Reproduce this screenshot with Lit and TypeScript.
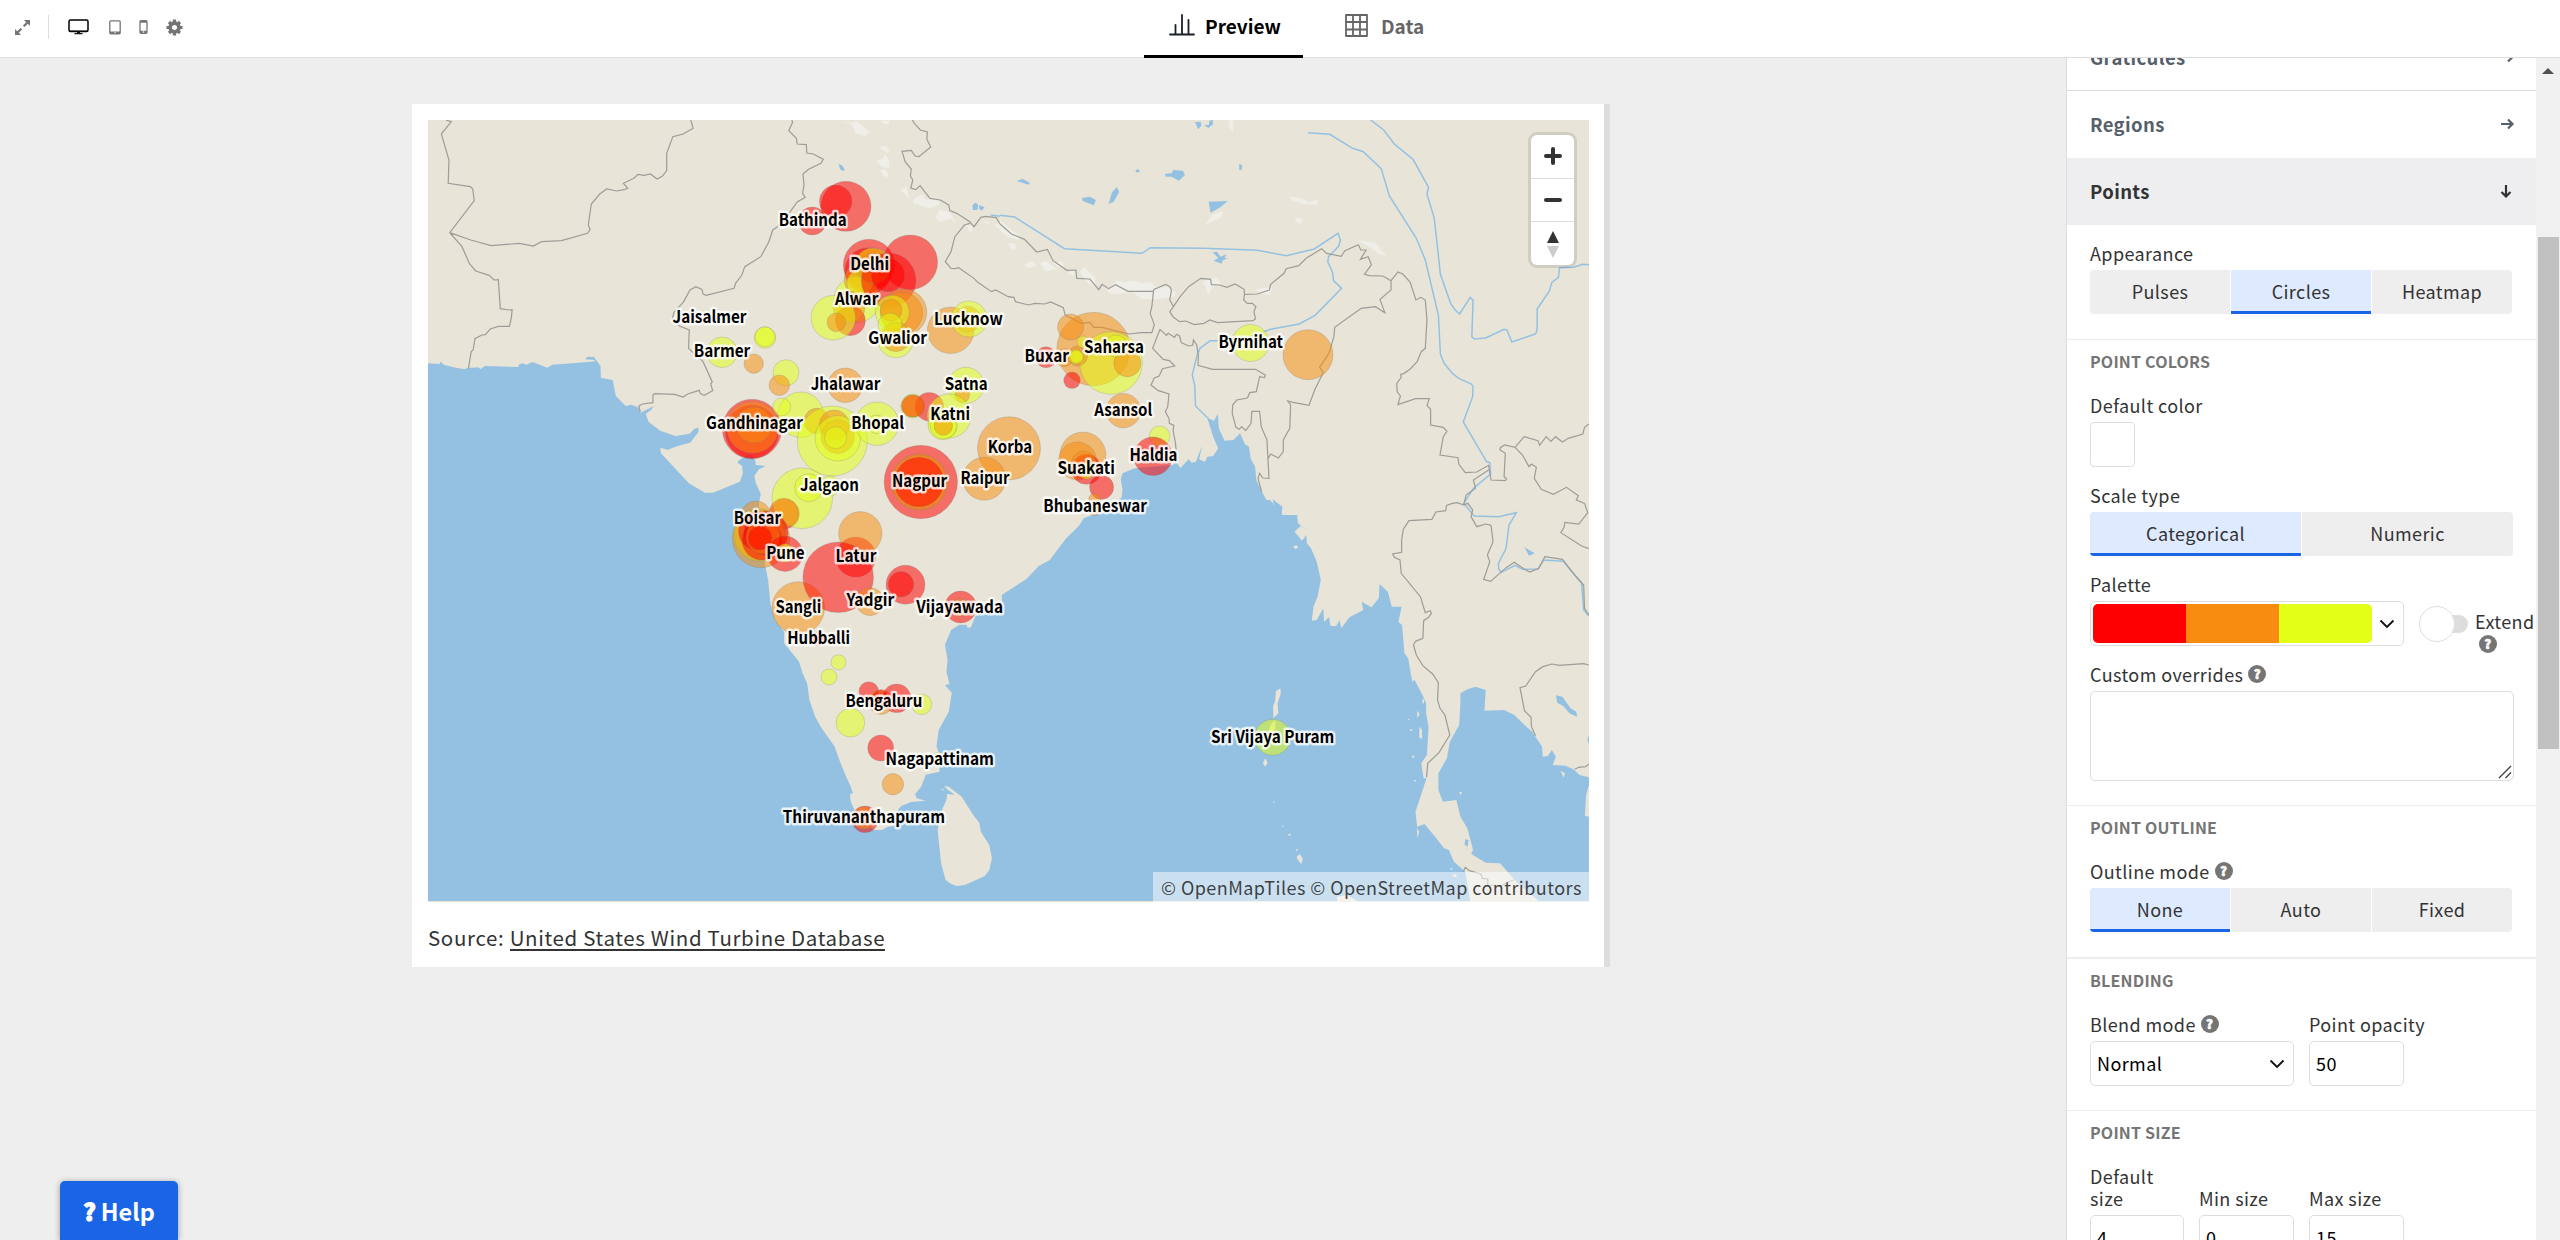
import { LitElement, html, css, svg, nothing } from "lit";
import { customElement, property } from "lit/decorators.js";
import { classMap } from "lit/directives/class-map.js";

type Dot = [number, number, number, "r" | "o" | "y"];
type Label = [string, number, number, number];

const FILL = { r: "#ff0000", o: "#f88c10", y: "#e2ff17" };

// Each sheet of the base map has its own drawing units.
const SHEETS = {
  nw: "translate(400 90) scale(.382653 .333333)",
  sw: "translate(400 500) scale(.382653 .333333)",
  ne: "translate(1000 90) scale(.408163 .333333)",
  se: "translate(1000 500) scale(.408163 .333333)",
};

const WATER = {
  nw: "M73 820L103 822L106 815L116 825L140 832L168 838L176 834L204 832L210 837L222 828L250 829L308 831L312 823L320 820L330 824L346 816L360 822L385 833L398 824L450 820L512 814L505 809L484 808L490 800L507 801L524 828L525 863L556 870L564 918L590 948L604 944L622 952L628 968L664 948L656 960L642 972L650 996L680 1022L720 1038L757 1031L768 1018L780 1012L780 1026L758 1058L726 1068L700 1079L680 1073L682 1090L755 1180L797 1208L818 1208L888 1175L896 1150L894 1128L882 1118L884 1112L908 1095L918 1095L928 1110L930 1125L955 1128L938 1138L926 1158L930 1180L943 1212L938 1240L938 1290L73 1290Z M1146 222L1155 226L1162 238L1160 244L1150 238Z M1496 345L1504 338L1511 344L1509 360L1497 360Z M1514 345L1528 352L1520 362L1513 356Z",
  sw: "M73 30L938 30L945 120L955 200L962 240L968 310L980 360L1004 395L1004 430L1043 485L1052 520L1064 550L1070 600L1085 650L1102 685L1135 738L1150 785L1166 830L1176 855L1184 880L1176 882L1178 905L1190 935L1216 968L1240 990L1260 990L1275 980L1290 978L1297 935L1310 918L1335 906L1374 902L1350 895L1346 882L1362 860L1374 824L1410 815L1408 760L1402 738L1408 690L1434 635L1442 578L1424 556L1436 552L1428 515L1431 480L1424 435L1440 390L1462 374L1480 374L1484 384L1492 382L1504 348L1530 335L1572 320L1572 1203L73 1203Z",
  ne: "M188 1320L205 1285L225 1275L265 1260L298 1222L300 1200L296 1168L300 1150L330 1135L370 1130L424 1125L430 1112L442 1134L462 1108L470 1118L480 1115L495 1067L488 1108L502 1115L508 1100L522 1098L535 1075L523 1030L510 985L524 992L534 972L536 1015L550 1052L572 1050L588 1030L600 1062L610 1070L614 1105L625 1130L628 1170L642 1206L660 1245L672 1250L668 1228L692 1250L690 1275L728 1275L730 1300L748 1318Z M478 96L492 95L493 108L485 118Z M500 105L512 104L513 92L522 90L521 104L510 114Z M41 273L55 266L73 278L70 284Z M201 324L220 320L235 330L230 346L203 333Z M266 342L274 308L286 291L292 306L278 336Z M404 251L420 250L425 240L448 242L453 256L438 272L420 260L406 260Z M586 222L594 226L592 240L586 239Z M331 242L338 237L343 244L336 248Z M511 335L558 333L540 352L516 368Z M521 487L532 485L540 500L556 492L550 504L558 505L546 511L543 521L523 512L535 504Z",
  se: "M0 340L6 318L4 285L64 238L95 198L122 180L162 115L190 82L210 55L236 60L270 40L290 0L662 0L670 12L676 35L688 20L690 45L706 45L718 62L734 80L722 95L740 122L750 105L752 130L762 145L776 185L786 240L778 290L768 320L764 362L776 360L792 325L794 365L806 352L810 378L824 378L832 360L836 385L856 352L890 330L886 305L910 322L928 295L930 252L950 275L960 320L984 320L976 365L985 375L991 460L1000 475L1010 545L1016 540L1035 585L1044 610L1044 640L1050 680L1046 765L1032 790L1038 835L1045 835L1018 935L1022 980L1040 972L1066 1010L1088 1045L1100 1050L1112 1085L1140 1115L1152 1203L0 1203Z M1128 580L1145 568L1165 560L1190 570L1187 632L1235 630L1260 645L1290 680L1304 695L1328 740L1330 770L1342 768L1352 750L1362 770L1354 795L1385 797L1405 808L1420 825L1443 832L1443 855L1436 885L1433 948L1443 950L1443 1203L1320 1203L1265 1145L1225 1090L1190 1088L1155 1062L1158 1045L1145 985L1128 950L1118 900L1085 905L1074 870L1074 820L1095 775L1102 725L1125 675L1128 610Z M1285 142L1310 160L1296 167Z M1362 586L1378 590L1398 625L1412 635L1414 650L1395 640L1380 618L1365 608Z M1443 705L1439 718L1443 735Z M1140 1018L1148 1020L1146 1040L1138 1034Z",
};

const ISLANDS = {
  sw: "M1422 858L1434 860L1468 890L1498 945L1514 968L1518 995L1540 1035L1547 1075L1540 1110L1528 1128L1494 1146L1476 1155L1456 1158L1440 1152L1426 1140L1414 1090L1405 990L1418 925L1428 900L1430 882L1450 884L1430 868Z M1412 866L1420 868L1420 872Z",
  se: "M687 565L676 574L674 605L669 618L670 655L682 640L680 610L688 580Z M675 662L666 668L658 692L668 704L674 685Z M650 775L644 790L650 800L656 788Z M735 1062L727 1070L730 1080L738 1092L742 1077Z M669 905h3v4h-3z M691 977h3v4h-3z M707 1001h5v6h-5z M725 1048h4v4h-4z M826 1190L850 1186L875 1203L826 1203Z M1022 632L1028 642L1022 655Z M1028 680L1034 690L1034 718L1027 712Z M1035 598h4v12h-4z M1005 688h5v5h-5z M1010 767h5v6h-5z M1014 840h5v4h-5z M1000 657h3v4h-3z M1021 985L1027 995L1023 1015Z M1373 812L1384 820L1381 833Z M1126 876h5v7h-5z M1104 1105h4v5h-4z M1108 1125l8-3 4 6-8 4z M724 92L737 78L748 88L745 98L736 94L728 100Z M718 140L726 136L731 142L724 147Z M1152 1030L1160 1055L1154 1050Z",
};

const SNOW = {
  nw: "M1152 92L1180 98L1192 93L1212 108L1228 126L1215 138L1190 130L1182 104Z M1256 92L1280 92L1276 104L1262 100Z M1253 172L1268 168L1281 180L1272 190Z M1244 212L1260 206L1268 194L1279 210L1278 234L1262 232Z M1254 240L1268 238L1278 256L1268 263Z M1308 300L1324 290L1331 327Z M1341 328L1366 312L1374 330L1400 322L1412 342L1385 356L1342 340Z M1400 382L1410 360L1436 366L1455 402L1440 386L1410 396Z M1480 402L1498 412L1490 430Z M1524 392L1540 396L1536 406Z M1552 405L1568 400L1568 418Z",
  ne: "M560 90L573 92L570 126L563 112Z M0 390L20 412L50 440L44 450L18 440L0 420Z M20 458L40 462L36 480L24 474Z M58 524L78 512L90 525L70 535Z M98 520L112 512L140 538L112 544Z M130 520L152 514L158 532L140 530Z M162 550L180 540L188 556L176 556Z M196 545L206 530L234 565L232 590L212 575Z M262 605L285 572L310 575L330 572L348 580L370 575L378 590L410 590L430 606L428 620L400 625L385 628L345 626L325 606L275 612Z M498 575L512 566L535 565L540 585L520 590L510 615L506 596Z M628 596L668 592L660 615L635 608Z M708 318L740 326L755 336L778 330L778 344L745 342L716 332Z M720 384L745 386L733 402Z M502 404L522 372L546 364L544 380L520 396Z M876 450L920 458L946 498L928 492L905 472Z",
};

const BORDERS = {
  nw: "M120 90L134 95L108 132L128 210L126 280L184 290L190 297L194 332L130 428L162 470L182 522L198 543L233 556L246 570L257 569L262 656L284 660L293 659L291 684L286 709L257 709L236 717L223 734L214 735L196 746L191 780L186 785L179 835 M130 428L185 450L238 467L312 460L348 468L370 455L422 452L490 430L497 418L492 405L500 342L522 312L540 297L566 303L586 299L595 294L584 280L612 264L622 253L638 256L654 252L672 267L686 258L697 242L697 190L713 140L740 132L766 115L760 90 M1024 90L1026 97L1016 122L1036 145L1038 162L1062 164L1063 189L1080 192L1106 208L1100 220L1068 238L1053 252L1056 285L1052 310L1059 322L1038 336L1018 368L985 412L974 420L964 455L943 500L901 530L893 556L877 580L873 595L800 616L792 612L789 598L773 590L758 600L740 637L716 667L712 685L730 708L756 720L754 775L770 792L792 815L816 876L812 882L817 902L795 916L785 911L782 901L752 912L740 921L718 913L665 911L661 915L661 938L634 942L624 948L628 966 M1339 90L1344 100L1360 120L1378 126L1377 148L1387 171L1356 200L1346 198L1336 181L1312 184L1320 215L1336 237L1334 258L1340 270L1335 294L1348 299L1359 287L1385 325L1412 330L1434 345L1437 362L1455 370L1489 395L1500 410L1518 382L1530 379L1558 383L1568 402 M1489 400L1475 405L1450 440L1440 485L1425 515L1440 535L1452 536L1460 533L1500 565L1510 577L1546 605L1556 600L1568 607",
  ne: "M0 402L28 432L60 448L90 486L116 478L130 512L164 541L186 540L188 565L220 567L242 599L250 583L266 596L283 584L314 604L376 604L377 598L406 583L416 590L420 600L416 630L425 650L440 622L462 590L492 565L516 568L518 584L538 585L556 592L576 582L598 598L599 613L630 612L660 600L663 583L696 550L701 536L732 527L750 505L788 476L800 490L836 499L845 482L878 464L884 480L897 480L883 508L902 500L910 524L893 553L905 557L938 558L958 572L975 546L987 552L1005 577L1019 630L1031 622L1042 630L1046 690L1042 775L1032 785L1022 815L1005 837L990 850L982 853L983 862L972 880L973 905L981 918L975 944L1018 926L1052 926L1046 946L1055 958L1055 1005L1086 1012L1095 1024L1086 1040L1078 1095L1122 1103L1124 1122L1140 1148L1168 1146L1197 1126L1203 1170L1238 1172L1241 1166L1235 1160L1238 1090L1225 1080L1226 1073L1236 1065L1262 1072L1284 1040L1318 1052L1322 1066L1338 1040L1350 1054L1361 1040L1378 1056L1392 1045L1428 1032L1432 1012L1443 1002 M0 607L20 620L34 622L38 635L70 645L85 640L110 642L124 636L155 653L160 676L200 700L220 697L230 712L250 712L316 732L345 728L372 728L378 704L368 670L372 650L376 604 M425 650L416 665L425 682L440 695L455 693L476 704L500 700L514 690L533 698L620 692L626 686L622 665L627 650L618 640L606 640L597 630L599 613 M392 718L374 775L400 808L415 812L428 828L398 836L390 858L378 864L370 885L388 902L414 912L411 950L405 965L414 985L415 1000L426 1006L424 1020L430 1060L434 1115 M392 718L408 736L412 730L428 742L432 733L440 738L444 758L462 768L472 766L474 750L482 765L486 800L485 826L521 838L626 838L650 855L648 863L636 860L628 905L612 908L606 924L580 930L570 945L569 970L578 1012L586 1018L592 1010L602 1022L615 1000L617 964L636 964L640 1010L654 1050L659 1165L644 1164L636 1150L632 1165L641 1205 M657 1105L663 1092L682 1104L694 1085L694 1050L710 1015L712 945L705 933L718 937L757 946L772 897L792 848L783 832L806 790L818 740L820 712L885 655L920 650L943 668L931 628L958 600L958 572 M1262 1072L1280 1095L1296 1130L1302 1122L1314 1132L1309 1165L1326 1198L1356 1213L1388 1192L1417 1217L1412 1230L1432 1240L1440 1268L1418 1302L1384 1297L1382 1312L1374 1328L1425 1368L1443 1376 M1197 1140L1160 1170L1165 1195L1142 1215L1136 1245L1120 1238L1108 1240L1094 1246L1092 1262L1068 1266L1058 1288L1002 1292L988 1318 M1136 1245L1146 1240L1158 1260L1154 1280L1168 1310L1190 1302L1203 1306",
  se: "M988 88L984 120L984 157L962 162L966 172L980 180L983 220L1030 290L1042 338L1054 332L1057 340L1050 352L1038 362L1036 415L1018 424L1013 435L1020 465L1036 497L1060 522L1074 548L1072 600L1078 625L1090 645L1102 705L1076 757L1048 790L1045 832 M1203 76L1208 125L1194 165L1200 185L1185 238L1202 244L1240 203L1260 187L1285 208L1298 216L1320 205L1335 170L1378 178L1410 228L1430 255L1432 325L1443 345 M1443 495L1430 491L1370 496L1352 492L1330 500L1312 515L1288 558L1274 563L1285 632L1301 652L1302 680L1312 707 M1408 808L1418 802L1435 800L1443 792 M1135 1115L1140 1102L1150 1112L1178 1122L1182 1135L1195 1137L1195 1155L1230 1157L1240 1148L1258 1140",
};

const RIVERS = {
  nw: "M1544 375L1568 379",
  ne: "M0 376L36 381L158 476L348 490L368 473L500 475L630 481L702 497L770 477L828 430L834 450L830 468L805 500L803 515L815 548L817 572L837 595L772 676L733 702L663 718L600 745L530 752L515 752L490 775L482 800L471 855L477 885L479 948L510 985L524 1040L537 1076L528 1100 M755 128L808 133L864 175L890 185L934 236L954 318L1020 445L1042 510L1074 675L1079 792L1088 820L1108 850L1125 866L1155 882L1159 890L1158 920L1135 996L1192 1115L1200 1118L1202 1152L1160 1195L1136 1240L1162 1278L1222 1280L1265 1268L1247 1305L1240 1375 M908 90L940 120L966 162L1012 208L1050 292L1046 312L1064 385L1079 553L1104 640L1115 660L1126 672L1152 622L1159 630L1156 740L1162 747L1190 744L1235 718L1242 720L1254 756L1312 732L1316 720L1316 657L1346 603L1352 577L1368 562L1371 533L1405 532L1428 523L1443 524",
  se: "M1240 145L1221 190L1222 208L1228 217L1262 196L1280 208L1318 207L1332 180L1380 184L1425 250L1430 330L1443 348",
};

const DOTS: Dot[] = [
  [846, 206.3, 25, "r"], [835.7, 201.3, 16.3, "r"], [812.3, 221, 14, "r"],
  [869, 265, 25.7, "r"], [910.3, 262.3, 27.3, "r"], [868, 271, 23.3, "r"],
  [857, 299.5, 23, "y"], [861.5, 280, 17.3, "o"], [860, 283, 13, "y"], [873, 266, 18, "y"], [872, 265, 17, "o"],
  [874, 268, 15, "o"], [888.7, 280.3, 27.3, "r"], [888, 275, 16.7, "r"],
  [850.3, 320.7, 15, "r"], [849, 307, 16, "o"], [833.3, 317.7, 22.3, "y"], [836.3, 322.3, 9.3, "o"],
  [903.5, 312.3, 23.3, "o"], [901.5, 313, 21, "o"], [892.3, 312.3, 17, "y"], [891, 310.3, 11, "o"],
  [895.7, 340, 17.7, "y"], [896, 337, 14.5, "o"], [890, 325, 12, "y"],
  [950.7, 330.3, 23.3, "o"], [967.7, 319.3, 13, "o"], [969, 319, 18, "y"],
  [765, 337.7, 10.7, "y"], [765, 336.7, 10, "y"], [722, 352.3, 15.3, "y"], [753.7, 363.7, 9.7, "o"],
  [786, 372.7, 13, "y"], [779.3, 385.3, 10.3, "o"], [845.3, 385.3, 17.3, "o"],
  [966, 385.3, 18, "y"], [962.3, 395, 7.3, "o"], [912.7, 406, 12, "y"], [912.7, 406, 11, "r"],
  [929.3, 406.7, 14.3, "r"], [912.7, 406, 11, "o"], [949, 416, 22, "y"], [942.7, 425, 14.7, "y"], [943.3, 426, 13, "y"], [943.3, 426, 9.3, "o"],
  [752, 429, 29.7, "r"], [752, 431.7, 26.7, "r"], [752.7, 427.3, 26, "o"], [754, 425, 18, "o"],
  [800.7, 414.7, 22.7, "y"], [781.7, 407, 9, "y"], [816.7, 421, 12.7, "o"], [832.3, 441, 35, "y"],
  [834.3, 425, 15, "o"], [837.7, 436.7, 16.7, "o"], [837.7, 438.3, 22.7, "y"], [835.7, 437.7, 11, "y"],
  [877, 423.7, 21.7, "y"], [876.7, 424.3, 9.3, "y"],
  [920.8, 482, 36.7, "r"], [919.5, 482, 28.3, "o"], [919.3, 482, 27, "o"], [919, 482, 24.8, "r"],
  [784.5, 514, 15, "r"], [802.2, 498.3, 30.3, "y"], [808.7, 487.7, 14, "y"], [830, 486, 10, "y"],
  [756, 516, 15, "o"], [783.8, 513, 14.7, "o"],
  [761, 539, 28.7, "o"], [759.5, 535, 26.3, "y"], [759.5, 535, 25.5, "o"], [766, 533, 22, "r"],
  [758, 531, 19.5, "r"], [762, 540, 20, "r"], [763, 537, 17, "o"], [760, 538, 12, "r"],
  [785, 553.7, 17.7, "r"], [785, 553, 9.3, "y"],
  [855.8, 557, 20, "r"], [860.3, 533.3, 21.7, "o"], [798.2, 608, 26.3, "o"], [838.2, 577.3, 35.3, "r"],
  [870, 601.7, 14, "o"], [905.5, 584.7, 19.5, "r"], [901, 584.3, 12.7, "r"],
  [960.6, 607, 16, "r"], [960, 607.7, 9, "o"], [818, 638.7, 7, "r"],
  [838.5, 662.3, 7.5, "y"], [829, 677, 8, "y"], [868.8, 691.5, 9.8, "r"], [881, 702, 12.5, "o"], [880.5, 699, 9, "r"],
  [896.7, 698.3, 14.3, "r"], [921.6, 704.3, 10.2, "y"], [850.4, 722.7, 14.3, "y"], [880.7, 748, 13, "r"],
  [938.8, 759.3, 7, "y"], [892.9, 784.3, 10.7, "o"], [865, 819.3, 13.3, "r"], [864.2, 818, 11.3, "o"],
  [1093.5, 349, 36.7, "o"], [1070.6, 327, 13, "o"], [1111, 363, 31.3, "y"], [1127.3, 363.3, 13.5, "o"], [1116, 346, 11, "y"],
  [1046, 357.3, 10.5, "r"], [1064, 357.7, 9, "o"], [1077.5, 356, 10, "o"], [1076, 356.7, 7.5, "y"], [1076.5, 356.7, 6.5, "y"], [1083, 342, 6, "y"],
  [1072, 380.3, 8.3, "r"], [1123.3, 410.7, 17.2, "o"], [1159.6, 436.3, 10.3, "y"], [1153, 456.3, 19.3, "r"],
  [1009, 448.3, 31.5, "o"], [984.3, 478.7, 21.5, "o"], [1082.9, 455, 23, "o"], [1077.5, 461, 19, "o"],
  [1086.5, 469.3, 15, "r"], [1083.7, 463, 12, "o"], [1086.5, 471, 8, "y"], [1101.6, 487.3, 12, "r"],
  [1094.7, 499.3, 6, "o"], [1094.7, 509, 6.5, "o"], [1250.6, 343, 18.5, "y"], [1308, 354.7, 25, "o"], [1272.7, 737.3, 18, "y"],
];

// name, left edge, baseline, drawn width
const LABELS: Label[] = [
  ["Bathinda", 778.7, 225.7, 68], ["Delhi", 850.3, 270, 38.7], ["Alwar", 835, 304.7, 43.3], ["Lucknow", 934, 325.3, 68.7],
  ["Gwalior", 868.3, 343.7, 58.7], ["Jaisalmer", 672.5, 323.3, 74], ["Barmer", 693.7, 357, 56.6], ["Jhalawar", 810.7, 389.7, 69.6],
  ["Satna", 944.7, 389.7, 43], ["Gandhinagar", 706, 428.7, 97], ["Bhopal", 851.3, 428.7, 52.7], ["Katni", 930.3, 420.3, 39.7],
  ["Korba", 987.8, 453, 44.4], ["Raipur", 960.6, 483.7, 48.8], ["Nagpur", 892, 486.7, 55.2], ["Jalgaon", 800, 490.7, 59],
  ["Boisar", 733.7, 524.3, 47.3], ["Pune", 766.2, 558.7, 38.3], ["Latur", 835.5, 562.3, 40.9], ["Yadgir", 846.6, 606.3, 47.8],
  ["Sangli", 775.4, 613.3, 45.9], ["Vijayawada", 916.2, 613.3, 86.8], ["Hubballi", 787.3, 644, 62.7], ["Bengaluru", 845.4, 706.7, 76.9],
  ["Nagapattinam", 885.6, 764.7, 108.4], ["Thiruvananthapuram", 782.7, 823.3, 162.3], ["Saharsa", 1084, 353.3, 60], ["Buxar", 1024.5, 362.3, 44.5],
  ["Byrnihat", 1218.4, 348.3, 64.6], ["Asansol", 1094.3, 415.7, 57.9], ["Haldia", 1129.4, 461, 48.1], ["Suakati", 1057.5, 473.7, 57.5],
  ["Bhubaneswar", 1043.3, 511.7, 103.7], ["Sri Vijaya Puram", 1211, 742.7, 123.3],
];

@customElement("city-map")
class CityMap extends LitElement {
  static styles = css`
    :host { display: block; position: relative; width: 1161px; height: 782px; overflow: hidden; }
    .base { display: block; width: 1161px; height: 782px; }
    .land { fill: #e8e5d8; }
    .water { fill: #94c1e1; }
    .snow { fill: #efeee8; }
    .border { fill: none; stroke: #9c9c98; stroke-width: 1.2; vector-effect: non-scaling-stroke; }
    .river { fill: none; stroke: #94c1e1; stroke-width: 1.5; vector-effect: non-scaling-stroke; }
    .dot { fill-opacity: .52; stroke: #777; stroke-opacity: .35; stroke-width: .7; }
    .name { font: 700 17px "Noto Sans CJK JP", "Noto Sans CJK SC", "Open Sans", sans-serif; fill: #000; stroke: rgba(255,255,255,.78); stroke-width: 5px; stroke-linejoin: round; paint-order: stroke; }
    .zoom { position: absolute; right: 15px; top: 15px; width: 43px; height: 130px; background: #fff; border-radius: 6px; box-shadow: 0 0 0 3px rgba(0,0,0,.1); display: flex; flex-direction: column; }
    .key { flex: 1; display: flex; align-items: center; justify-content: center; }
    .key + .key { border-top: 1px solid #ddd; }
    .credit { position: absolute; right: 0; bottom: 0; box-sizing: border-box; height: 30px; width: 436px; padding-left: 8px; background: rgba(255,255,255,.5); color: rgba(40,40,40,.88); font: 400 18px/30px "Noto Sans CJK JP", "Noto Sans", sans-serif; letter-spacing: .45px; white-space: nowrap; }
  `;
  private layer(cls: string, parts: Record<string, string>) {
    return Object.entries(parts).map(
      ([key, d]) => svg`<path class=${cls} transform=${SHEETS[key as keyof typeof SHEETS]} d=${d}></path>`,
    );
  }
  render() {
    return html`
      <svg class="base" viewBox="428 120 1161 782">
        <rect class="land" x="428" y="120" width="1161" height="782"></rect>
        ${this.layer("snow", SNOW)}
        ${this.layer("water", WATER)}
        ${this.layer("land", ISLANDS)}
        ${this.layer("river", RIVERS)}
        ${this.layer("border", BORDERS)}
        ${DOTS.map(([x, y, r, c]) => svg`<circle class="dot" cx=${x} cy=${y} r=${r} fill=${FILL[c]}></circle>`)}
        ${LABELS.map(([t, x, y, w]) => svg`<text class="name" x=${x} y=${y} textLength=${w} lengthAdjust="spacingAndGlyphs">${t}</text>`)}
      </svg>
      <div class="zoom">
        <div class="key"><svg width="20" height="20"><path d="M10 3v14M3 10h14" stroke="#333" stroke-width="4" stroke-linecap="round"></path></svg></div>
        <div class="key"><svg width="20" height="20"><path d="M3 10h14" stroke="#333" stroke-width="4" stroke-linecap="round"></path></svg></div>
        <div class="key"><svg width="14" height="30"><path d="M7 2l6 12H1z" fill="#333"></path><path d="M7 29l6-12H1z" fill="#ccc"></path></svg></div>
      </div>
      <div class="credit">© OpenMapTiles © OpenStreetMap contributors</div>
    `;
  }
}

@customElement("help-mark")
class HelpMark extends LitElement {
  static styles = css`
    :host { display: inline-flex; width: 18px; height: 18px; border-radius: 50%; background: #757575; color: #fff; align-items: center; justify-content: center; font: 900 13px/18px "Noto Sans CJK JP", sans-serif; flex: none; }
    .glyph { -webkit-text-stroke: .6px #fff; }
  `;
  render() {
    return html`<span class="glyph">?</span>`;
  }
}

@customElement("segment-control")
class SegmentControl extends LitElement {
  @property({ type: Array }) options: string[] = [];
  @property({ type: Number }) active = 0;
  static styles = css`
    :host { display: flex; gap: 1px; height: 44px; border-radius: 4px; overflow: hidden; }
    .seg { flex: 1; box-sizing: border-box; height: 44px; line-height: 43px; text-align: center; background: #eee; color: #333; border-bottom: 0 solid #1a65e5; }
    .seg.on { background: #deeaff; border-bottom-width: 3px; }
  `;
  render() {
    return this.options.map((o, i) => html`<div class=${classMap({ seg: true, on: i === this.active })}>${o}</div>`);
  }
}

@customElement("settings-panel")
class SettingsPanel extends LitElement {
  static styles = css`
    :host { display: flex; width: 494px; overflow: hidden; background: #fff; box-sizing: border-box; border-left: 1px solid #ddd; font: 400 18px/22px "Noto Sans CJK JP", "Noto Sans", sans-serif; letter-spacing: .4px; color: #333; }
    .body { width: 469px; flex: none; display: flex; flex-direction: column; margin-top: -35px; }
    .row { flex: none; box-sizing: border-box; height: 67px; padding: 0 20px 1px 23px; display: flex; align-items: center; justify-content: space-between; font-weight: 700; font-size: 18.5px; color: #56606a; letter-spacing: .35px; line-height: 28px; }
    .row.line { height: 68px; padding-bottom: 0; border-bottom: 1px solid #ddd; }
    .row.open { background: #eeeef0; color: #333; }
    .part { flex: none; padding: 11px 22px 24px 23px; border-bottom: 1px solid #eee; display: flex; flex-direction: column; gap: 17px; }
    .part.first { padding-top: 17px; padding-bottom: 25px; }
    .part.outline { padding-bottom: 25px; border-bottom-width: 2px; }
    .title { font-size: 16px; line-height: 20px; font-weight: 700; color: #757575; margin-bottom: 6px; letter-spacing: .2px; }
    .field { display: flex; flex-direction: column; gap: 6px; }
    .label { display: flex; align-items: center; gap: 5px; min-height: 22px; }
    .three { width: 422px; }
    .two { width: 423px; }
    .swatch { width: 45px; height: 45px; box-sizing: border-box; border: 1px solid #ddd; border-radius: 4px; }
    .line-up { display: flex; gap: 15px; align-items: flex-end; }
    .box { flex: none; box-sizing: border-box; height: 45px; border: 1px solid #ddd; border-radius: 5px; color: #000; line-height: 43px; padding: 0 6px; display: flex; align-items: center; }
    .w94 { width: 94px; }
    .w95 { width: 95px; }
    .w204 { width: 204px; justify-content: space-between; padding-right: 8px; }
    .narrow { width: 94px; }
    .palette { width: 314px; padding: 0 8px 0 2px; justify-content: space-between; }
    .bar { display: flex; flex: none; width: 279px; height: 39px; border-radius: 5px; overflow: hidden; }
    .tint { flex: 1; }
    .red { background: #f00; }
    .orange { background: #f88c10; }
    .lime { background: #e4ff17; }
    .pal-row { display: flex; }
    .toggle { display: flex; flex: none; margin-left: 15px; width: 49px; align-items: center; height: 45px; }
    .knob { width: 34px; height: 34px; flex: none; border: 1px solid #ddd; border-radius: 50%; background: #fff; z-index: 1; }
    .pill { width: 31px; height: 18px; flex: none; margin-left: -18px; background: #ddd; border-radius: 9px; }
    .extend { flex: none; margin-left: 7px; padding-top: 9px; width: 60px; display: flex; flex-direction: column; line-height: 22px; }
    .below { margin: 3px 0 -8px 4px; }
    .area { box-sizing: border-box; width: 424px; height: 90px; border: 1px solid #ddd; border-radius: 5px; display: flex; align-items: flex-end; justify-content: flex-end; padding: 1px; }
    .track { width: 24px; flex: none; background: #f1f1f1; display: flex; flex-direction: column; align-items: center; }
    .up { margin-top: 10px; height: 6px; }
    .up svg { display: block; }
    .thumb { margin: 163px 0 0 1px; width: 21px; height: 512px; background: #c1c1c1; }
  `;
  private chevron() {
    return html`<svg width="16" height="10"><path d="M1.5 1.5l6.500 6.500 6.500-6.500" fill="none" stroke="#111" stroke-width="1.8"></path></svg>`;
  }
  private arrow(down: boolean) {
    return html`<svg width="17" height="14" viewBox="0 0 17 14"><path d=${down ? "M7 1v11M2.500 8l4.500 4.500L11.500 8" : "M2 7h11M9 2.500L13.500 7L9 11.500"} fill="none" stroke="currentColor" stroke-width="2.2"></path></svg>`;
  }
  private label(text: string, help = false) {
    return html`<div class="label"><span>${text}</span>${help ? html`<help-mark></help-mark>` : nothing}</div>`;
  }
  render() {
    return html`
      <div class="body">
        <div class="row line"><span>Graticules</span>${this.arrow(false)}</div>
        <div class="row"><span>Regions</span>${this.arrow(false)}</div>
        <div class="row open"><span>Points</span>${this.arrow(true)}</div>
        <div class="part first">
          <div class="field">${this.label("Appearance")}
            <segment-control class="three" .options=${["Pulses", "Circles", "Heatmap"]} .active=${1}></segment-control></div>
        </div>
        <div class="part">
          <div class="title">POINT COLORS</div>
          <div class="field">${this.label("Default color")}<div class="swatch"></div></div>
          <div class="field">${this.label("Scale type")}
            <segment-control class="two" .options=${["Categorical", "Numeric"]} .active=${0}></segment-control></div>
          <div class="field">${this.label("Palette")}
            <div class="pal-row">
              <div class="box palette">
                <div class="bar"><div class="tint red"></div><div class="tint orange"></div><div class="tint lime"></div></div>
                ${this.chevron()}
              </div>
              <div class="toggle"><div class="knob"></div><div class="pill"></div></div>
              <div class="extend"><span>Extend</span><help-mark class="below"></help-mark></div>
            </div></div>
          <div class="field">${this.label("Custom overrides", true)}
            <div class="area"><svg width="14" height="14"><path d="M1 13L13 1M7.500 13L13 7.500" stroke="#444" stroke-width="1.400"></path></svg></div></div>
        </div>
        <div class="part outline">
          <div class="title">POINT OUTLINE</div>
          <div class="field">${this.label("Outline mode", true)}
            <segment-control class="three" .options=${["None", "Auto", "Fixed"]} .active=${0}></segment-control></div>
        </div>
        <div class="part">
          <div class="title">BLENDING</div>
          <div class="line-up">
            <div class="field">${this.label("Blend mode", true)}<div class="box w204"><span>Normal</span>${this.chevron()}</div></div>
            <div class="field">${this.label("Point opacity")}<div class="box w95">50</div></div>
          </div>
        </div>
        <div class="part">
          <div class="title">POINT SIZE</div>
          <div class="line-up">
            <div class="field narrow">${this.label("Default size")}<div class="box w94">4</div></div>
            <div class="field">${this.label("Min size")}<div class="box w95">0</div></div>
            <div class="field">${this.label("Max size")}<div class="box w95">15</div></div>
          </div>
        </div>
      </div>
      <div class="track">
        <div class="up"><svg width="12" height="6"><path d="M0 6L6 0L12 6z" fill="#505050"></path></svg></div>
        <div class="thumb"></div>
      </div>
    `;
  }
}

@customElement("app-root")
class AppRoot extends LitElement {
  static styles = css`
    :host { display: flex; flex-direction: column; width: 2560px; height: 1240px; overflow: hidden; background: #eee; position: relative; font-family: "Noto Sans CJK JP", "Noto Sans", sans-serif; color: #333; }
    .top { flex: none; box-sizing: border-box; height: 58px; background: #fff; border-bottom: 1px solid #ddd; display: flex; align-items: flex-start; }
    .tools { width: 1144px; display: flex; align-items: center; height: 54px; }
    .tools svg { display: block; flex: none; }
    .i-expand { margin-left: 14px; }
    .rule { width: 1px; height: 24px; background: #ddd; margin: 0 19px 0 17px; }
    .i-tablet { margin-left: 20px; }
    .i-phone { margin-left: 18px; }
    .i-gear { margin-left: 18px; }
    .tab { box-sizing: border-box; height: 58px; display: flex; align-items: flex-start; padding-top: 13px; font-weight: 700; font-size: 19px; line-height: 26px; color: #666; }
    .tab.on { width: 159px; padding-left: 24px; border-bottom: 3px solid #000; color: #000; gap: 9px; }
    .tab.off { padding-left: 41px; gap: 12px; }
    .main { flex: 1; min-height: 0; display: flex; justify-content: space-between; }
    .card { margin: 46px 0 0 412px; width: 1192px; height: 863px; box-sizing: border-box; background: #fff; box-shadow: 6px 0 0 #ddd; padding: 16px 15px 0 16px; }
    .source { margin-top: 18px; font-size: 20.5px; line-height: 34px; letter-spacing: .65px; white-space: nowrap; }
    .link { display: inline-block; line-height: 26px; border-bottom: 2px solid #333; height: 25px; }
    .help { position: absolute; left: 60px; bottom: 0; width: 118px; height: 59px; border-radius: 5px 5px 0 0; background: #1a65e5; color: #fff; box-shadow: 0 1px 6px rgba(0,0,0,.35); display: flex; justify-content: center; gap: 5px; font-weight: 700; font-size: 23.5px; line-height: 61px; }
    .q { font-weight: 900; -webkit-text-stroke: 1.2px #fff; }
  `;
  render() {
    return html`
      <div class="top">
        <div class="tools">
          <svg class="i-expand" width="17" height="17" viewBox="0 0 17 17"><path d="M10 1h6v6l-2.200-2.200-3.300 3.200-1.600-1.600 3.300-3.200zM7 16H1v-6l2.200 2.200 3.300-3.200 1.600 1.600-3.300 3.200z" fill="#757575"></path></svg>
          <div class="rule"></div>
          <svg width="21" height="16" viewBox="0 0 21 16"><rect x="1" y="1" width="19" height="11.500" rx="1.500" fill="none" stroke="#000" stroke-width="1.500"></rect><path d="M1 11.500h19v1H1zM9 12.500h3v1.500h2.500v1.300h-8V14H9z" fill="#111"></path></svg>
          <svg class="i-tablet" width="12" height="15" viewBox="0 0 12 15"><rect x=".8" y=".8" width="10.400" height="13" rx="1" fill="none" stroke="#757575" stroke-width="1.300"></rect><path d="M1 11.500h10v2.500H1z" fill="#757575"></path><circle cx="6" cy="12.600" r=".7" fill="#fff"></circle></svg>
          <svg class="i-phone" width="9" height="14" viewBox="0 0 9 14"><rect x="1" y=".7" width="7" height="12.600" rx="1" fill="none" stroke="#757575" stroke-width="1.300"></rect><path d="M1 1h7v1.800H1zM1 10.800h7V13H1z" fill="#757575"></path><circle cx="4.500" cy="12" r=".8" fill="#fff"></circle></svg>
          <svg class="i-gear" width="17" height="17" viewBox="-8.500 -8.500 17 17"><circle r="4.400" fill="none" stroke="#757575" stroke-width="3.600"></circle><path d="M0-8V-5M0 8V5M-8 0H-5M8 0H5M-5.500-5.500L-3.800-3.800M5.500 5.500L3.800 3.800M-5.500 5.500L-3.800 3.800M5.500-5.500L3.800-3.800" stroke="#757575" stroke-width="3.200"></path></svg>
        </div>
        <div class="tab on"><svg width="28" height="24" viewBox="0 0 28 24"><path d="M2 21.500h24M7.500 21V12M14 21V2M20.500 21V7" fill="none" stroke="#1b1f2a" stroke-width="1.800" stroke-linecap="round"></path></svg><span>Preview</span></div>
        <div class="tab off"><svg width="25" height="25" viewBox="0 0 25 25"><path d="M2 2h21v21H2zM9 2v21M16 2v21M2 9h21M2 16.500h21" fill="none" stroke="#666" stroke-width="1.800" stroke-linejoin="round"></path></svg><span>Data</span></div>
      </div>
      <div class="main">
        <div class="card">
          <city-map></city-map>
          <div class="source">Source: <span class="link">United States Wind Turbine Database</span></div>
        </div>
        <settings-panel></settings-panel>
      </div>
      <div class="help"><span class="q">?</span><span>Help</span></div>
    `;
  }
}
